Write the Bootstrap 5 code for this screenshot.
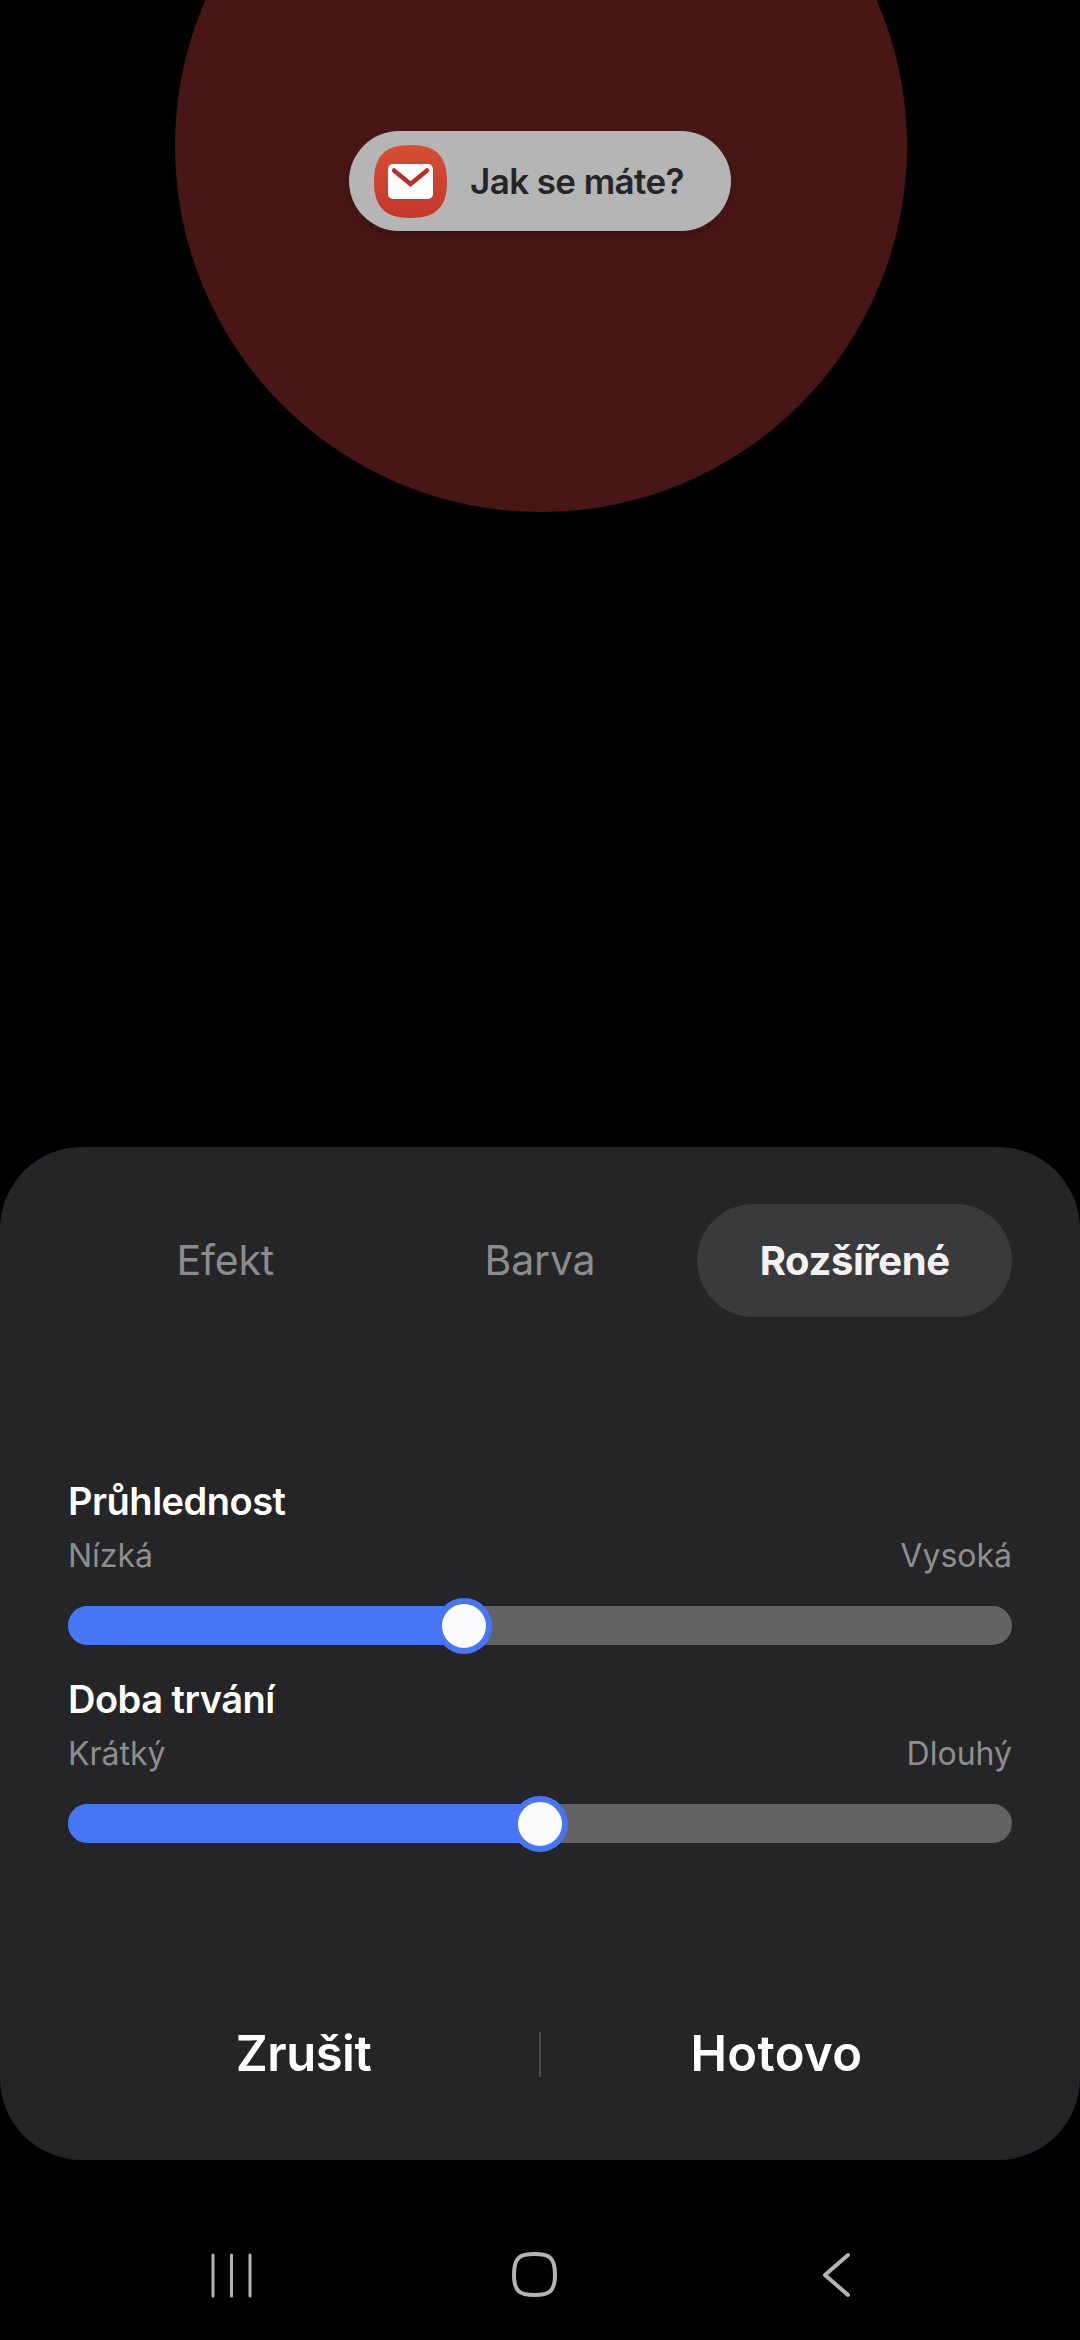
<!DOCTYPE html>
<html lang="cs">
<head>
    <meta charset="UTF-8">
    <meta name="viewport" content="width=device-width, initial-scale=1.0">
    <title>Rozšířené</title>
    <link href="https://cdn.jsdelivr.net/npm/bootstrap@5.3.3/dist/css/bootstrap.min.css" rel="stylesheet">
    <style>
        body {
            background: #000;
            font-family: "Inter", "Roboto", sans-serif;
            width: 1080px;
            height: 2340px;
            overflow: hidden;
        }

        /* edge lighting preview */
        .preview-area {
            height: 1147px;
            padding-top: 131px;
            overflow: hidden;
        }

        .glow-circle {
            position: absolute;
            left: 175px;
            top: -220px;
            width: 732px;
            height: 732px;
            border-radius: 50%;
            background: #481715;
        }

        .msg-pill {
            width: 382px;
            height: 100px;
            margin-left: 349px;
            padding-left: 25px;
            gap: 23px;
            background: #b5b5b5;
            border-radius: 50px;
            color: #252527;
            font-size: 35px;
            font-weight: 600;
            letter-spacing: -0.6px;
            box-shadow: 0 4px 14px rgba(0, 0, 0, .18);
        }

        .mail-icon {
            width: 73px;
            height: 73px;
        }

        /* bottom sheet */
        .sheet {
            height: 1013px;
            background: #252527;
            border-radius: 82px;
            padding: 57px 68px 0 68px;
        }

        .tab-row .nav-link {
            height: 113px;
            padding: 0;
            border-radius: 57px;
            color: #8c8c8e;
            font-size: 41px;
            line-height: 1;
            letter-spacing: -0.2px;
        }

        .tab-row .nav-link.active {
            background: #3a3a3c;
            color: #f2f2f2;
            font-weight: 700;
            font-size: 40px;
            letter-spacing: -0.4px;
        }

        .first-slider {
            margin-top: 161px;
        }

        .slider-name {
            color: #fff;
            font-size: 38px;
            font-weight: 600;
            line-height: 46px;
            letter-spacing: -0.5px;
        }

        .slider-ends {
            margin-top: 10px;
            color: #8e8e90;
            font-size: 32px;
            line-height: 44px;
            letter-spacing: 0;
        }

        .slider-track {
            margin-top: 28px;
            height: 39px;
        }

        .slider-track .progress {
            height: 39px;
            border-radius: 20px;
            background: #636366;
        }

        .slider-track .progress-bar {
            background: #4676f5;
        }

        .slider-thumb {
            position: absolute;
            top: 50%;
            width: 56px;
            height: 56px;
            border: 6px solid #4676f5;
            border-radius: 50%;
            background: #fcfcff;
            transform: translate(-50%, -50%);
        }

        .second-slider {
            margin-top: 31px;
        }

        .sheet-actions {
            margin-top: 181px;
        }

        .sheet-actions .btn {
            flex: 1 1 0;
            border: 0;
            padding: 0;
            color: #fff;
            font-size: 49px;
            font-weight: 600;
            line-height: 60px;
            letter-spacing: -0.5px;
        }

        .sheet-actions .btn.done-btn {
            letter-spacing: 0.4px;
        }

        .action-sep {
            width: 2px;
            height: 45px;
            background: #4a4a4c;
        }

        /* system navigation */
        .sys-nav {
            height: 180px;
            padding: 92px 0 0 198px;
        }

        .sys-nav svg {
            display: block;
        }

        .nav-home {
            margin-left: 254px;
        }

        .nav-back {
            margin-left: 265px;
        }
    </style>
</head>
<body>
    <div class="preview-area position-relative">
        <div class="glow-circle"></div>
        <div class="msg-pill d-flex align-items-center position-relative">
            <svg class="mail-icon flex-shrink-0" viewBox="0 0 73 73">
                <defs>
                    <linearGradient id="mailBg" x1="0" y1="0" x2="0" y2="1">
                        <stop offset="0" stop-color="#d64f34"/>
                        <stop offset="1" stop-color="#c4362b"/>
                    </linearGradient>
                </defs>
                <path d="M36.500 0C62 0 73 11 73 36.500S62 73 36.500 73 0 62 0 36.500 11 0 36.500 0Z" fill="url(#mailBg)"/>
                <rect x="14" y="19" width="45" height="35" rx="5" fill="#fff"/>
                <path d="M20 25.500 36.500 39 53 25.500" fill="none" stroke="#b8322a" stroke-width="4.500" stroke-linecap="round" stroke-linejoin="miter"/>
            </svg>
            <span>Jak se máte?</span>
        </div>
    </div>

    <div class="sheet">
        <ul class="nav nav-justified tab-row">
            <li class="nav-item"><a class="nav-link d-flex align-items-center justify-content-center" href="#">Efekt</a></li>
            <li class="nav-item"><a class="nav-link d-flex align-items-center justify-content-center" href="#">Barva</a></li>
            <li class="nav-item"><a class="nav-link active d-flex align-items-center justify-content-center" href="#">Rozšířené</a></li>
        </ul>

        <div class="first-slider">
            <div class="slider-name">Průhlednost</div>
            <div class="slider-ends d-flex justify-content-between"><span>Nízká</span><span>Vysoká</span></div>
            <div class="slider-track position-relative">
                <div class="progress"><div class="progress-bar" style="width: 42%"></div></div>
                <div class="slider-thumb" style="left: 42%"></div>
            </div>
        </div>

        <div class="second-slider">
            <div class="slider-name">Doba trvání</div>
            <div class="slider-ends d-flex justify-content-between"><span>Krátký</span><span>Dlouhý</span></div>
            <div class="slider-track position-relative">
                <div class="progress"><div class="progress-bar" style="width: 50%"></div></div>
                <div class="slider-thumb" style="left: 50%"></div>
            </div>
        </div>

        <div class="sheet-actions d-flex align-items-center">
            <button type="button" class="btn">Zrušit</button>
            <div class="action-sep"></div>
            <button type="button" class="btn done-btn">Hotovo</button>
        </div>
    </div>

    <div class="sys-nav d-flex align-items-start">
        <svg width="60" height="48" viewBox="0 0 60 48" fill="none" stroke="#b4b4b4" stroke-width="3" stroke-linecap="round">
            <path d="M15 3V44M33.500 3V44M52 3V44"/>
        </svg>
        <svg class="nav-home" width="45" height="45" viewBox="0 0 45 45" fill="none" stroke="#b4b4b4" stroke-width="4">
            <path d="M22.500 2C37 2 43 5 43 22.500S37 43 22.500 43 2 40 2 22.500 8 2 22.500 2Z"/>
        </svg>
        <svg class="nav-back" width="32" height="48" viewBox="0 0 32 48" fill="none" stroke="#b4b4b4" stroke-width="4" stroke-linecap="round" stroke-linejoin="round">
            <path d="M26 3 3 23 26 43"/>
        </svg>
    </div>

    <script src="https://cdn.jsdelivr.net/npm/bootstrap@5.3.3/dist/js/bootstrap.bundle.min.js"></script>
</body>
</html>
